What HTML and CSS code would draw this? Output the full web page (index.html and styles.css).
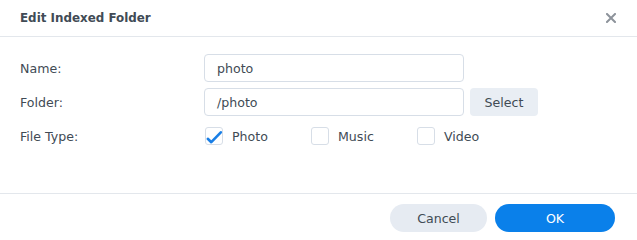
FILE: index.html
```html
<!DOCTYPE html>
<html>
<head>
<meta charset="utf-8">
<link rel="stylesheet" href="styles.css">
</head>
<body>
<div class="dialog">
  <div class="header">
    <div class="title">Edit Indexed Folder</div>
    <div class="close">
      <svg width="10" height="10" viewBox="0 0 10 10"><path d="M1 1L9 9M9 1L1 9" stroke="#8d939b" stroke-width="2" stroke-linecap="square" fill="none"/></svg>
    </div>
  </div>
  <div class="body">
    <div class="row">
      <div class="label">Name:</div>
      <div class="field"><div class="input">photo</div></div>
    </div>
    <div class="row">
      <div class="label">Folder:</div>
      <div class="field"><div class="input">/photo</div><div class="btn-select">Select</div></div>
    </div>
    <div class="row row-check">
      <div class="label">File Type:</div>
      <div class="field">
        <div class="opt">
          <span class="cb">
            <svg width="18" height="18" viewBox="0 0 18 18"><path d="M2.8 11.8L6.3 15.2L15.8 5.3" stroke="#1a7fe6" stroke-width="2.6" fill="none" stroke-linecap="round" stroke-linejoin="round"/></svg>
          </span>
          <span class="opt-text">Photo</span>
        </div>
        <div class="opt"><span class="cb"></span><span class="opt-text">Music</span></div>
        <div class="opt"><span class="cb"></span><span class="opt-text">Video</span></div>
      </div>
    </div>
  </div>
  <div class="footer">
    <div class="btn btn-cancel">Cancel</div>
    <div class="btn btn-ok">OK</div>
  </div>
</div>
</body>
</html>
```
FILE: styles.css
```css
html, body {
  margin: 0;
  padding: 0;
  background: #fff;
}
body {
  font-family: "DejaVu Sans", Verdana, sans-serif;
  font-size: 12.6px;
  color: #414b55;
}
.dialog {
  width: 637px;
  height: 239px;
  display: flex;
  flex-direction: column;
}
.header {
  height: 37px;
  box-sizing: border-box;
  border-bottom: 1px solid #e3e7ec;
  display: flex;
  align-items: center;
  justify-content: space-between;
  padding: 0 21px 1px 20px;
}
.title {
  font-weight: bold;
  font-size: 11.9px;
  color: #414b55;
}
.close {
  width: 10px;
  height: 10px;
  display: flex;
}
.body {
  padding: 17px 0 0 20px;
  flex: 1;
  box-sizing: border-box;
}
.row {
  display: flex;
  align-items: center;
  height: 28px;
  margin-bottom: 6px;
}
.row-check {
  height: 18px;
  margin-top: 11px;
}
.label {
  width: 184px;
}
.field {
  display: flex;
  align-items: center;
}
.input {
  width: 260px;
  height: 28px;
  box-sizing: border-box;
  border: 1px solid #d7dee7;
  border-radius: 4px;
  padding: 0 12px;
  display: flex;
  align-items: center;
}
.btn-select {
  margin-left: 6px;
  width: 68px;
  height: 28px;
  border-radius: 4px;
  background: #e9eef4;
  display: flex;
  align-items: center;
  justify-content: center;
}
.opt {
  width: 106px;
  display: flex;
  align-items: center;
}
.opt:first-child {
  margin-left: 1px;
}
.cb {
  width: 18px;
  height: 18px;
  box-sizing: border-box;
  border: 1px solid #d7dee7;
  border-radius: 3px;
  display: flex;
  align-items: center;
  justify-content: center;
}
.cb svg {
  margin: -1px;
}
.opt-text {
  margin-left: 9px;
}
.footer {
  height: 46px;
  border-top: 1px solid #e3e7ec;
  display: flex;
  justify-content: flex-end;
  align-items: flex-start;
  padding: 10px 22px 0 0;
  box-sizing: border-box;
  margin-bottom: 0;
}
.btn {
  height: 28px;
  border-radius: 14px;
  display: flex;
  align-items: center;
  justify-content: center;
}
.btn-cancel {
  width: 97px;
  background: #e6ebf2;
}
.btn-ok {
  width: 120px;
  margin-left: 8px;
  background: #0a80ea;
  color: #fff;
}
```
